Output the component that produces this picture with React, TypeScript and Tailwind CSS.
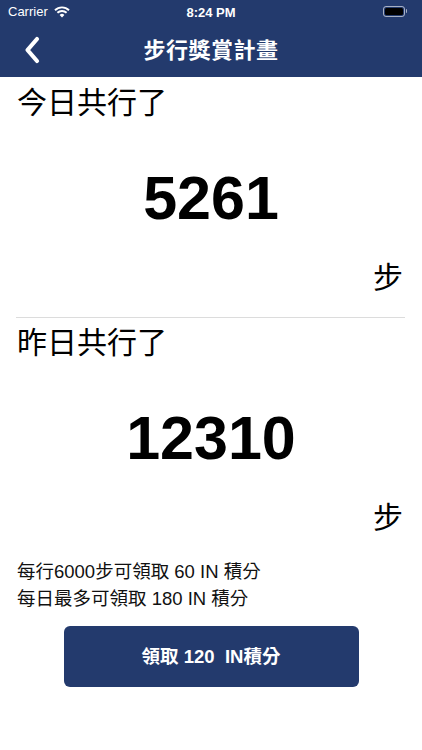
import React from 'react';

const font = { fontFamily: '"Liberation Sans", "Noto Sans CJK TC", sans-serif' };

function StatusBar() {
  return (
    <div className="relative flex h-[22px] items-center px-2 text-[13px] text-white">
      <span className="mt-[1px]">Carrier</span>
      <svg className="ml-[6px] mt-[1px]" width="16" height="12" viewBox="0 0 16 12">
        <path d="M8 11.5 L5.6 9 A3.4 3.4 0 0 1 10.4 9 Z" fill="white" />
        <path d="M3.4 6.8 A6.6 6.6 0 0 1 12.6 6.8" stroke="white" strokeWidth="1.9" fill="none" />
        <path d="M1 4.2 A10 10 0 0 1 15 4.2" stroke="white" strokeWidth="1.9" fill="none" />
      </svg>
      <span className="absolute left-1/2 top-[3px] -translate-x-1/2 font-semibold">8:24 PM</span>
      <div className="ml-auto mr-[7px] flex items-center">
        <div className="h-[11px] w-[22px] rounded-[3px] border border-white/60 p-[1px]">
          <div className="h-full w-full rounded-[1.5px] bg-black" />
        </div>
        <div className="ml-[1px] h-[4px] w-[1.5px] rounded-r bg-white/60" />
      </div>
    </div>
  );
}

function DaySection({ label, steps }: { label: string; steps: string }) {
  return (
    <div>
      <div className="h-[34px] pl-[17px] text-[30px] leading-[34px] text-black">{label}</div>
      <div className="mt-[43px] h-[70px] text-center text-[61px] font-bold leading-[70px] text-black">
        {steps}
      </div>
      <div className="mt-[28px] h-[34px] pr-[19px] text-right text-[30px] leading-[34px] text-black">步</div>
    </div>
  );
}

export default function App() {
  return (
    <div className="min-h-[750px] w-full bg-white" style={font}>
      <header className="h-[77px] bg-[#233a6d]">
        <StatusBar />
        <div className="relative flex h-[55px] items-center justify-center">
          <button className="absolute left-[22px] top-[14px] p-0">
            <svg width="20" height="28" viewBox="0 0 20 28">
              <path d="M15 3 L5.5 14 L15 25" stroke="white" strokeWidth="4.2" strokeLinecap="round" strokeLinejoin="round" fill="none" />
            </svg>
          </button>
          <h1 className="mt-[2px] text-[22px] font-bold tracking-[0.5px] text-white">步行獎賞計畫</h1>
        </div>
      </header>

      <div className="pt-[9px]">
        <DaySection label="今日共行了" steps="5261" />
        <div className="ml-4 mr-[17px] mt-[22px] h-px bg-[#dcdcdc]" />
        <div className="pt-[8px]">
          <DaySection label="昨日共行了" steps="12310" />
        </div>

        <div className="mt-[23px] pl-[17px] text-[18.5px] leading-[27px] text-[#111]">
          <p>每行6000步可領取 60 IN 積分</p>
          <p>每日最多可領取 180 IN 積分</p>
        </div>

        <div className="mt-[14px] flex justify-center">
          <button className="flex h-[61px] w-[295px] items-center justify-center rounded-[6px] bg-[#233a6d] text-[18.5px] font-bold text-white">
            領取 120&nbsp; IN積分
          </button>
        </div>
      </div>
    </div>
  );
}
